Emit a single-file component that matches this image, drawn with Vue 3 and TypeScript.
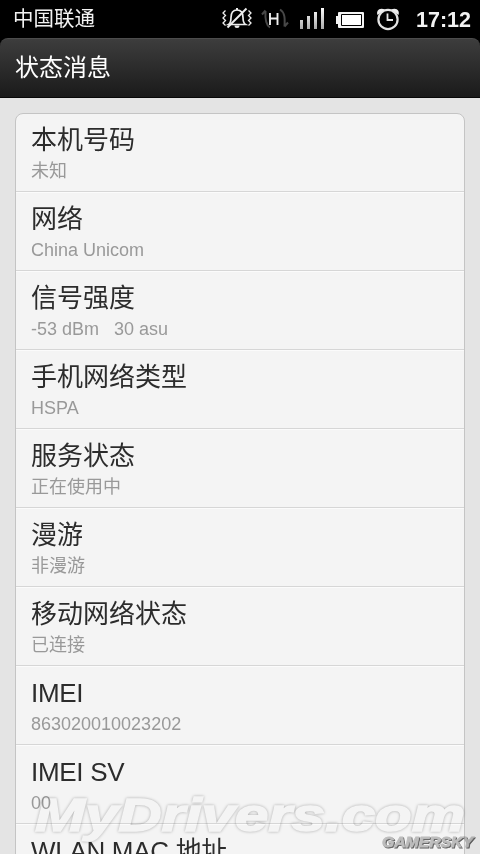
<script setup lang="ts">
interface StatusItem {
  title: string
  value: string
  latin?: boolean
}

const items: StatusItem[] = [
  { title: '本机号码', value: '未知' },
  { title: '网络', value: 'China Unicom' },
  { title: '信号强度', value: '-53 dBm   30 asu' },
  { title: '手机网络类型', value: 'HSPA' },
  { title: '服务状态', value: '正在使用中' },
  { title: '漫游', value: '非漫游' },
  { title: '移动网络状态', value: '已连接' },
  { title: 'IMEI', value: '863020010023202', latin: true },
  { title: 'IMEI SV', value: '00', latin: true },
  { title: 'WLAN MAC 地址', value: '', latin: true },
]
</script>

<template>
  <div class="screen">
    <header class="status-bar">
      <span class="carrier">中国联通</span>
      <div class="indicators">
        <svg class="silent" width="30" height="24" viewBox="0 0 30 24" fill="none" stroke="#eee">
          <path d="M3.500 3.500L1 6l2.500 2.500L1 11l2.500 2.500L1 16l2.500 2.500M26.500 3.500L29 6l-2.500 2.500L29 11l-2.500 2.500L29 16l-2.500 2.500" stroke-width="1.300" />
          <path d="M6.500 17.500c2.500-1.500 2.500-4 2.500-7C9 6 11 3 15 3s6 3 6 7.500c0 3 0 5.500 2.500 7z" stroke-width="1.700" />
          <path d="M12.500 18.500h5a2.500 2.500 0 0 1-5 0z" fill="#eee" stroke="none" />
          <path d="M15 1v2" stroke-width="2" />
          <path d="M5.500 20.500L24.500 1.500" stroke-width="2" />
        </svg>
        <svg class="data" width="28" height="24" viewBox="0 0 28 24" fill="none">
          <path d="M9 20.500C4.500 18 4 12 4.500 4M1 7.500l3.500-4M19 2.500c5 3 5 9 4.500 17M27 15.500l-3.500 4" stroke="#484848" stroke-width="2" />
          <path d="M9 6v12M16.500 6v12M9 11.500h7.500" stroke="#eee" stroke-width="1.900" />
        </svg>
        <svg class="signal" width="26" height="24" viewBox="0 0 26 24">
          <defs>
            <linearGradient id="bars" x1="0" y1="0" x2="0" y2="1">
              <stop offset="0" stop-color="#fff" />
              <stop offset="1" stop-color="#aaa" />
            </linearGradient>
          </defs>
          <path d="M0 13h3v9H0zM7 9h3v13H7zM14 5h3v17h-3zM21 1h3v21h-3z" fill="url(#bars)" />
        </svg>
        <svg class="battery" width="28" height="24" viewBox="0 0 28 24">
          <path d="M3 5h24q1 0 1 1v14q0 1-1 1H3q-1 0-1-1v-3H0V9h2V6q0-1 1-1z" fill="#f4f4f4" />
          <path d="M5.500 7.500h20v11h-20z" fill="#fff" stroke="#000" />
        </svg>
        <svg class="alarm" width="24" height="24" viewBox="0 0 24 24" fill="none" stroke="#e4e4e4">
          <circle cx="12" cy="12.500" r="9.600" stroke-width="2.200" />
          <path d="M11.500 6.500v6.500h5.500" stroke-width="1.800" />
          <path d="M1.500 8C0 4 3 0 9 2.500M22.500 8C24 4 21 0 15 2.500" fill="#eee" stroke="none" />
        </svg>
        <span class="clock">17:12</span>
      </div>
    </header>
    <div class="title-wrap">
      <h1 class="title-bar">状态消息</h1>
    </div>
    <main class="content">
      <ul class="card">
        <li v-for="item in items" :key="item.title" class="row">
          <div class="row-title" :class="{ latin: item.latin }">{{ item.title }}</div>
          <div class="row-value">{{ item.value }}</div>
        </li>
      </ul>
    </main>
    <svg class="watermarks" width="480" height="74" viewBox="0 0 480 74">
      <text class="mark-large" x="35" y="51" textLength="430" lengthAdjust="spacingAndGlyphs">MyDrivers.com</text>
      <text class="mark-small" x="382" y="66.500" textLength="91" lengthAdjust="spacingAndGlyphs">GAMERSKY</text>
    </svg>
  </div>
</template>

<style>
body {
  background: #000;
  overflow: hidden;
}
</style>

<style scoped>
.screen {
  position: relative;
  display: flex;
  flex-direction: column;
  width: 480px;
  height: 854px;
  overflow: hidden;
  background: #e4e4e4;
  font-family: "Liberation Sans", "Noto Sans CJK SC", sans-serif;
}

.status-bar {
  display: flex;
  flex: none;
  justify-content: space-between;
  box-sizing: border-box;
  height: 38px;
  padding: 7px 9px 0 13px;
  background: #000;
  color: #f2f2f2;
}

.carrier {
  font-size: 20.500px;
  line-height: 23px;
}

.indicators {
  display: flex;
}

.data {
  margin-left: 9px;
}

.signal {
  margin-left: 11px;
}

.battery {
  margin-left: 10px;
}

.alarm {
  margin-left: 12px;
}

.clock {
  width: 55px;
  margin-left: 16px;
  font-size: 21.500px;
  font-weight: bold;
  line-height: 26px;
}

.title-wrap {
  flex: none;
  height: 60px;
  background: #000;
}

.title-bar {
  box-sizing: border-box;
  height: 60px;
  margin: 0;
  padding: 15px 15px 0;
  border-top: 1px solid #4c4c4c;
  border-bottom: 1px solid #080808;
  border-radius: 8px 8px 0 0;
  background: linear-gradient(#3d3d3d, #1a1a1a);
  color: #fff;
  font-size: 24px;
  font-weight: normal;
  line-height: 28px;
}

.content {
  flex: 1;
  min-height: 0;
  padding: 15px 15px 0;
}

.card {
  margin: 0;
  padding: 0;
  border: 1px solid #c4c4c4;
  border-radius: 8px 8px 0 0;
  background: #f4f4f4;
  list-style: none;
}

.row {
  box-sizing: border-box;
  height: 79px;
  padding: 12px 15px 0;
  border-bottom: 1px solid #d6d6d6;
  box-shadow: inset 0 1px #fbfbfb;
}

.row:first-child {
  height: 78px;
  padding-top: 11px;
  box-shadow: none;
}

.row-title {
  color: #2c2c2c;
  font-size: 26px;
  line-height: 30px;
}

.row-title.latin {
  letter-spacing: -0.300px;
}

.row-value {
  margin-top: 6px;
  color: #999;
  font-size: 18px;
  line-height: 20px;
  white-space: pre;
}

.watermarks {
  position: absolute;
  bottom: 0;
  left: 0;
  mix-blend-mode: multiply;
}

.mark-large {
  fill: #fff;
  font-family: "Liberation Sans", sans-serif;
  font-size: 47px;
  font-style: italic;
  font-weight: bold;
  stroke: #fff;
  stroke-width: 1.500px;
  filter: drop-shadow(0 0 1.500px rgba(0, 0, 0, 0.300));
}

.mark-small {
  fill: #c6c6c6;
  font-family: "Liberation Sans", sans-serif;
  font-size: 14.500px;
  font-style: italic;
  font-weight: bold;
  stroke: #c6c6c6;
  stroke-width: 0.800px;
  filter: drop-shadow(1px 1px 0.500px #666);
}
</style>
